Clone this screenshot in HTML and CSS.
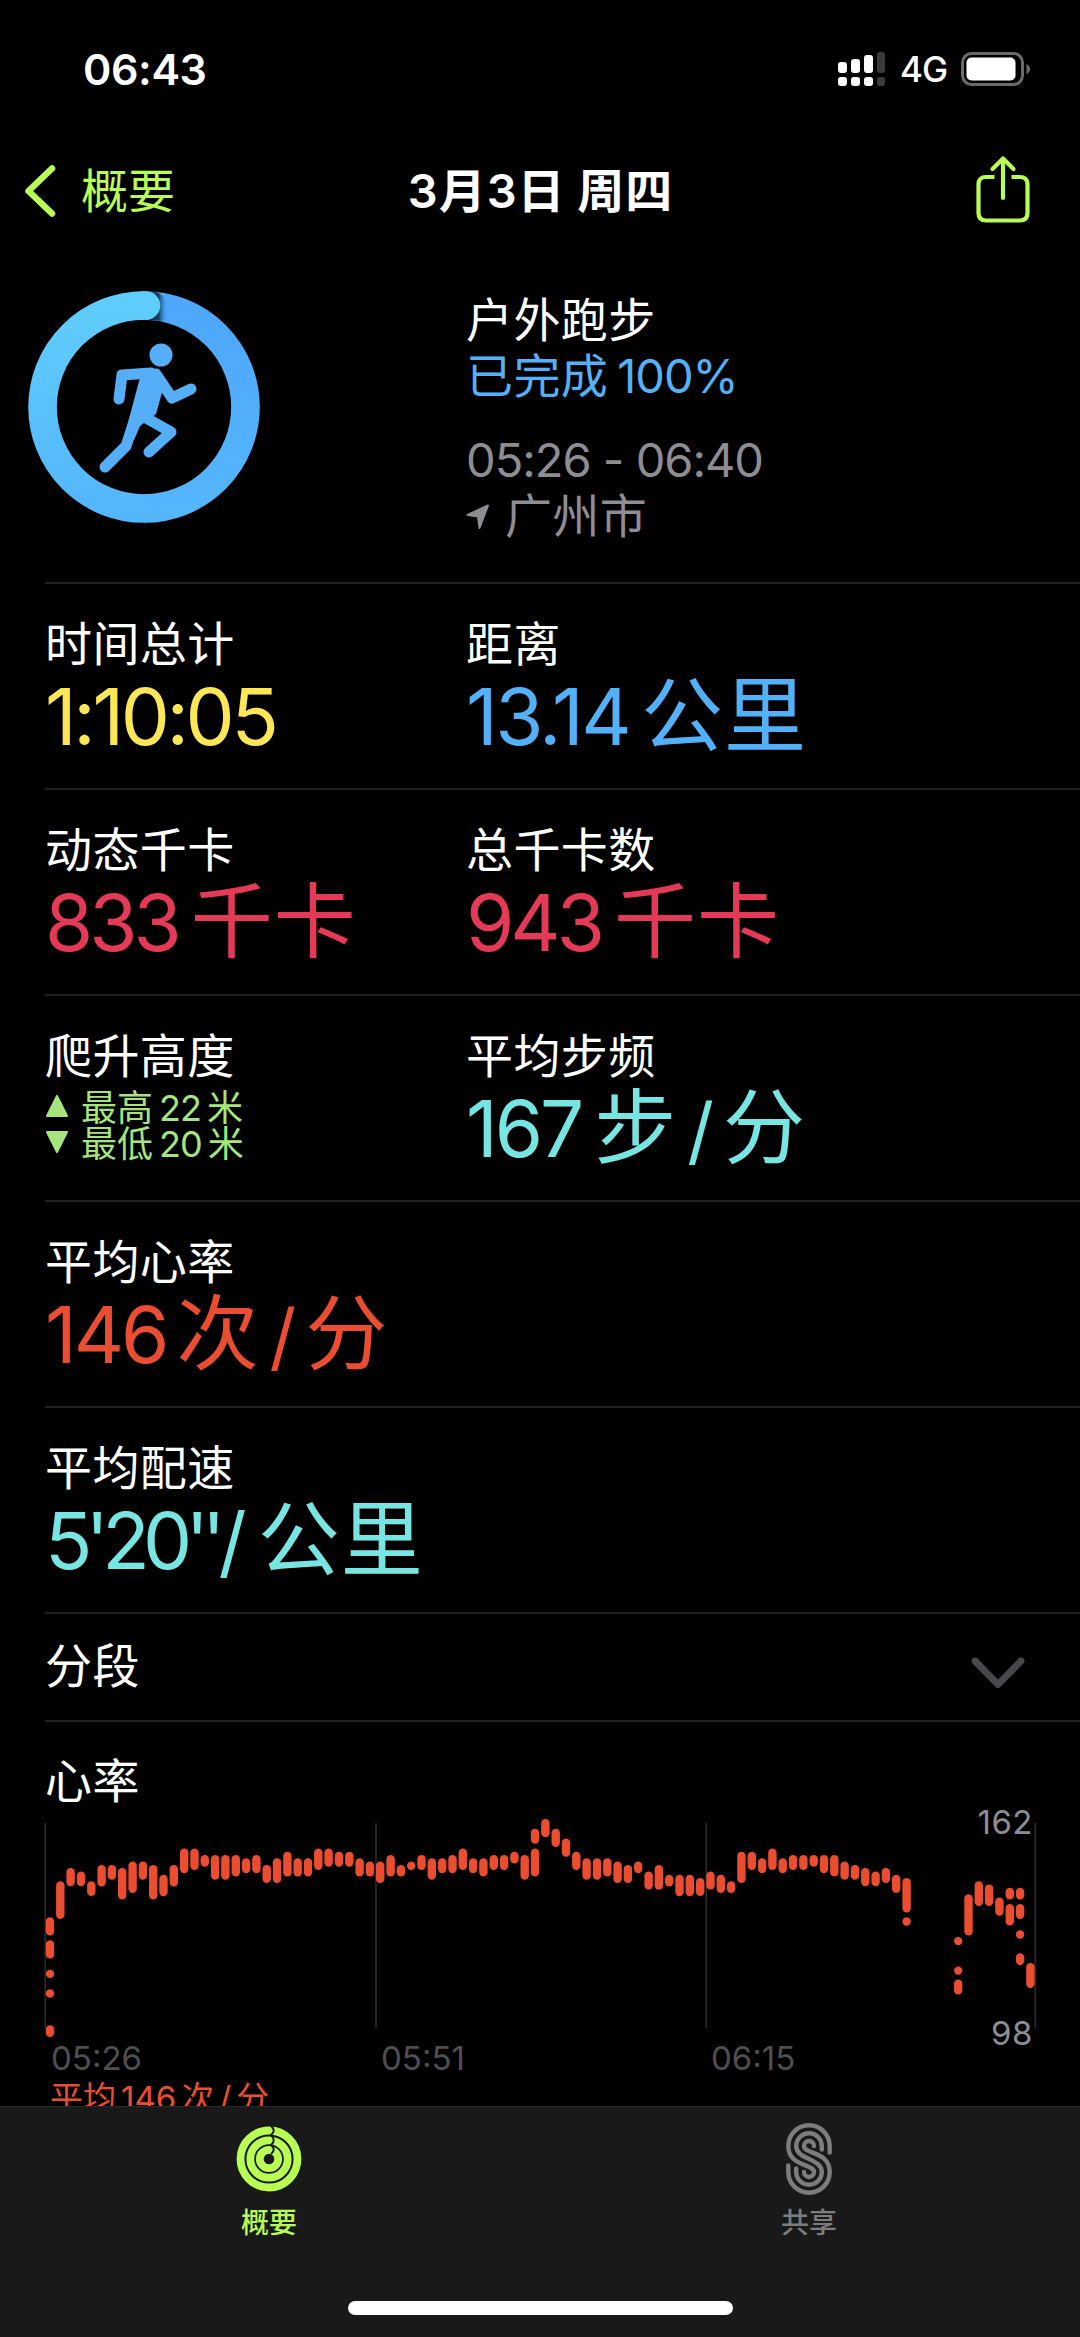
FILE: index.html
```
<!DOCTYPE html>
<html lang="zh-CN">
    <head>
        <meta charset="utf-8">
        <title>户外跑步</title>
        <link rel="stylesheet" href="styles.css">
    </head>
    <body>
        <div class="screen">
            <div class="statusBar">
                <div class="clock">06:43</div>
                <div class="statusIcons">
                    <svg class="signal" width="48" height="36" viewBox="0 0 48 36">
                        <g fill="#fff">
                            <rect x="0" y="11" width="9" height="11" rx="3"/>
                            <rect x="13" y="8" width="9" height="14" rx="3"/>
                            <rect x="26" y="4" width="9" height="18" rx="3"/>
                            <rect x="0" y="26" width="9" height="9" rx="3"/>
                            <rect x="13" y="26" width="9" height="9" rx="3"/>
                            <rect x="26" y="26" width="9" height="9" rx="3"/>
                        </g>
                        <g fill="#3a3a3a">
                            <rect x="39" y="1" width="8" height="21" rx="3"/>
                            <rect x="39" y="26" width="8" height="9" rx="3"/>
                        </g>
                    </svg>
                    <span class="network">4G</span>
                    <svg class="battery" width="70" height="34" viewBox="0 0 70 34">
                        <rect x="1.5" y="1.5" width="60" height="31" rx="9" fill="none" stroke="#6a6a6a" stroke-width="3"/>
                        <rect x="5.5" y="5.5" width="49" height="23" rx="5" fill="#fff"/>
                        <path d="M65.500 12 Q69 13.500 69 17 Q69 20.500 65.500 22Z" fill="#6a6a6a"/>
                    </svg>
                </div>
            </div>
            <div class="navBar">
                <div class="back">
                    <svg width="32" height="54" viewBox="0 0 32 54">
                        <path d="M28 4.500 L4.500 27 L28 49.500" fill="none" stroke="#b8fc54" stroke-width="6.500" stroke-linecap="round" stroke-linejoin="round"/>
                    </svg>
                    <span>概要</span>
                </div>
                <div class="navTitle"><b>3</b>月<b>3</b>日 周四</div>
                <svg class="share" width="54" height="68" viewBox="0 0 54 68">
                    <path d="M18.500 21 H10 Q2.500 21 2.500 28.500 V57 Q2.500 64.500 10 64.500 H44 Q51.500 64.500 51.500 57 V28.500 Q51.500 21 44 21 H35.500" fill="none" stroke="#b8fc54" stroke-width="4.200"/>
                    <path d="M27 42 V3 M16.500 13 L27 2.500 L37.500 13" fill="none" stroke="#b8fc54" stroke-width="4.200" stroke-linecap="round" stroke-linejoin="round"/>
                </svg>
            </div>

            <div class="hero">
                <div class="ring">
                    <svg width="234" height="242" viewBox="0 0 234 242">
                        <defs>
                            <linearGradient id="ringLeft" x1="0" y1="0" x2="0" y2="1">
                                <stop offset="0" stop-color="#5fcdfb"/>
                                <stop offset="1" stop-color="#54b6fb"/>
                            </linearGradient>
                            <linearGradient id="ringRight" x1="0" y1="0" x2="0" y2="1">
                                <stop offset="0" stop-color="#4ea7fb"/>
                                <stop offset="1" stop-color="#54b6fb"/>
                            </linearGradient>
                            <linearGradient id="capShadow" x1="0" y1="0" x2="1" y2="0">
                                <stop offset="0.5" stop-color="#123a5c"/>
                                <stop offset="1" stop-color="#4ea8fb" stop-opacity="0"/>
                            </linearGradient>
                        </defs>
                        <path d="M117 15.500 A101.500 101.500 0 0 1 117 218.500" fill="none" stroke="url(#ringRight)" stroke-width="28.600"/>
                        <path d="M118 218.500 H117 A101.500 101.500 0 0 1 117 15.500" fill="none" stroke="url(#ringLeft)" stroke-width="28.600"/>
                        <path d="M122 1.300 Q138 2 141 15 Q142 26 136 31 L122 30Z" fill="url(#capShadow)"/>
                        <path d="M116 15.500 H119" fill="none" stroke="#5fcdfb" stroke-width="28.600" stroke-linecap="round"/>
                        <circle cx="134" cy="65" r="11.500" fill="#55aff8"/>
                        <g fill="none" stroke="#55aff8" stroke-linecap="round" stroke-linejoin="round">
                            <path d="M124 83 L95 85 L92 109" stroke-width="11"/>
                            <path d="M129 84 L145 108 L164 99" stroke-width="11"/>
                            <path d="M112 124 L144 142 L122 162" stroke-width="11"/>
                            <path d="M109 126 L99 156 L78 177" stroke-width="11"/>
                        </g>
                        <path d="M114 84 L126 78 L134 86 L136 99 L129 124 L113 136 L107 150 L96 151Z" fill="#55aff8"/>
                    </svg>
                </div>
                <div class="heroInfo">
                    <div class="white">户外跑步</div>
                    <div class="blue done">已完成<b>100%</b></div>
                    <div class="period"><b>05:26 - 06:40</b></div>
                    <div class="place">
                        <svg width="24" height="26" viewBox="0 0 24 26">
                            <path d="M1.500 11 L22 1.500 L13.500 24 L12 12.500Z" fill="#8e8d93" stroke="#8e8d93" stroke-width="2" stroke-linejoin="round"/>
                        </svg>
                        <span>广州市</span>
                    </div>
                </div>
            </div>

            <div class="row">
                <div class="stat">
                    <div class="label">时间总计</div>
                    <div class="value yellow"><b class="duration">1:10:05</b></div>
                </div>
                <div class="stat">
                    <div class="label">距离</div>
                    <div class="value blue"><b class="distance">13.14</b>公里</div>
                </div>
            </div>
            <div class="row">
                <div class="stat">
                    <div class="label">动态千卡</div>
                    <div class="value red"><b>833</b>千卡</div>
                </div>
                <div class="stat">
                    <div class="label">总千卡数</div>
                    <div class="value red"><b>943</b>千卡</div>
                </div>
            </div>
            <div class="row">
                <div class="stat">
                    <div class="label">爬升高度</div>
                    <div class="climb">
                        <div class="climbLine">
                            <svg width="24" height="24" viewBox="0 0 24 24"><path d="M12 2 L22 22 H2Z"/></svg>
                            <span>最高<b>22</b>米</span>
                        </div>
                        <div class="climbLine">
                            <svg width="24" height="24" viewBox="0 0 24 24"><path d="M12 22 L22 2 H2Z"/></svg>
                            <span>最低<b>20</b>米</span>
                        </div>
                    </div>
                </div>
                <div class="stat">
                    <div class="label">平均步频</div>
                    <div class="value cyan"><b class="rate">167</b>步<i>/</i>分</div>
                </div>
            </div>
            <div class="row">
                <div class="stat">
                    <div class="label">平均心率</div>
                    <div class="value orange"><b class="pulse">146</b>次<i>/</i>分</div>
                </div>
            </div>
            <div class="row">
                <div class="stat">
                    <div class="label">平均配速</div>
                    <div class="value cyan"><b class="pace">5'20''/</b>公里</div>
                </div>
            </div>
            <div class="row segments">
                <div class="label">分段</div>
                <svg width="54" height="34" viewBox="0 0 54 34">
                    <path d="M4 4 L27 27.500 L50 4" fill="none" stroke="#48484a" stroke-width="6.800" stroke-linecap="round" stroke-linejoin="round"/>
                </svg>
            </div>

            <div class="heart">
                <div class="label">心率</div>
                <svg id="heartChart" width="1035" height="244" viewBox="0 0 1035 244"></svg>
                <div class="times">
                    <span>05:26</span>
                    <span>05:51</span>
                    <span>06:15</span>
                </div>
                <div class="average">平均<b>146</b>次<i>/</i>分</div>
            </div>

            <div class="tabBar">
                <div class="tab active">
                    <svg width="66" height="74" viewBox="-33 -37 66 74">
                        <g fill="none" stroke="#b8fc54" stroke-width="7.800">
                            <circle r="28.500"/>
                            <circle r="18.700"/>
                            <circle r="9.200"/>
                        </g>
                        <path d="M2 -33 Q7.500 -28.400 2 -24 Q7.500 -18.700 2 -14 Q7.500 -9.500 2 -5" fill="none" stroke="#191919" stroke-width="2"/>
                    </svg>
                    <span>概要</span>
                </div>
                <div class="tab">
                    <svg width="66" height="74" viewBox="-33 -37 66 74">
                        <g fill="none" stroke="#7d7d7d" stroke-width="4.400" stroke-linecap="round">
                            <path id="strand" d="M20.700 -6.500 V-13 A20.700 20.700 0 0 0 -20.700 -13 C-20.700 8 5 4.500 5 13 A5 5 0 0 1 -5 13"/>
                            <path d="M12.800 -9.500 V-13 A12.800 12.800 0 0 0 -12.800 -13 C-12.800 1 12.800 -1 12.800 13 A12.800 12.800 0 0 1 -12.800 13 V9.500"/>
                            <use href="#strand" transform="rotate(180)"/>
                        </g>
                    </svg>
                    <span>共享</span>
                </div>
            </div>
            <div class="homeIndicator"></div>
        </div>
        <script>
            // [slot, highest bpm, lowest bpm]
            const beats = [
                [0,132,129],[0,125,122],[0,116,116],[0,110,110],[0,99,98],
                [1,143,134],[2,147,144],[3,146,144],[4,143,141],[5,148,144],[6,148,146],[7,147,140],
                [8,149,142],[9,149,146],[10,148,140],[11,145,141],[12,148,144],[13,153,148],[14,153,149],
                [15,151,150],[16,151,146],[17,151,146],[18,151,147],[19,150,148],[20,151,148],[21,148,145],
                [22,150,145],[23,152,147],[24,150,147],[25,150,147],[26,153,149],[27,153,150],[28,152,150],
                [29,152,150],[30,150,147],[31,149,147],[32,149,145],[33,151,147],[34,148,147],[35,149,149],
                [36,151,149],[37,150,146],[38,150,148],[39,151,148],[40,153,149],[41,150,148],[42,150,147],
                [43,151,149],[44,151,149],[45,152,151],[46,151,146],[47,159,157],[47,153,147],[48,162,159],
                [49,159,156],[50,156,153],[51,152,149],[52,150,146],[53,150,146],[54,150,147],[55,149,145],
                [56,148,145],[57,149,148],[58,146,143],[59,148,143],[60,145,144],[61,145,141],[62,145,141],
                [63,144,141],[64,146,143],[65,145,142],[66,143,142],[67,152,145],[68,152,149],[69,150,148],
                [70,153,149],[71,150,148],[72,151,149],[73,151,149],[74,151,150],[75,151,148],[76,151,147],
                [77,149,146],[78,148,146],[79,147,144],[80,146,144],[81,147,145],[82,145,142],[83,144,136],
                [83,132,132],[88,126,126],[88,117,117],[88,113,111],[89,139,129],[90,143,138],[91,142,138],
                [92,138,135],[93,141,140],[93,136,132],[94,141,140],[94,136,134],[94,128,128],[94,121,120],
                [95,118,113]
            ];
            const step = 10.32;
            const bar = 8.4;
            const bpm = 3.275;
            let svg = '';
            for(let x of [-0.5, 330.2, 660.5, 989.5]){
                svg += `<rect class="gridLine" x="${x}" y="11" width="1.6" height="205"/>`;
            }
            for(let [slot, high, low] of beats){
                let x = 0.8 + slot * step;
                let y = 11.2 - bar / 2 + (162 - high) * bpm;
                let height = (high - low) * bpm + bar;
                svg += `<rect class="beat" x="${x.toFixed(1)}" y="${y.toFixed(1)}" width="${bar}" height="${height.toFixed(1)}" rx="${bar / 2}"/>`;
            }
            svg += '<text class="limit" x="988" y="22">162</text>';
            svg += '<text class="limit" x="988" y="233">98</text>';
            document.getElementById('heartChart').innerHTML = svg;
        </script>
    </body>
</html>
```
FILE: styles.css
```
*{
    margin: 0;
    padding: 0;
    box-sizing: border-box;
}
body{
    background: #000;
    font-family: "Noto Sans CJK SC", sans-serif;
    color: #fff;
}
svg{
    display: block;
    flex: none;
    overflow: visible;
}
b, i{
    font-family: Inter, sans-serif;
    font-weight: inherit;
    font-style: normal;
    line-height: 0;
}
.screen{
    position: relative;
    width: 1080px;
    height: 2337px;
    overflow: hidden;
    display: flex;
    flex-direction: column;
}
.statusBar{
    height: 138px;
    display: flex;
    justify-content: space-between;
    padding: 0 49px 0 83px;
    align-items: center;
    font-family: Inter, sans-serif;
}
.clock{
    font-size: 43px;
    font-weight: 600;
    letter-spacing: -0.4px;
}
.statusIcons{
    display: flex;
    align-items: center;
}
.network{
    width: 75px;
    text-align: center;
    font-size: 35px;
    font-weight: 500;
    letter-spacing: -1px;
}
.navBar{
    height: 106px;
    display: grid;
    grid-template-columns: 1fr auto 1fr;
    align-items: center;
    padding: 0 50px 0 24px;
    font-size: 47px;
    line-height: 56px;
}
.back{
    display: flex;
    align-items: center;
    gap: 25px;
    color: #b8fc54;
}
.back span, .navTitle{
    margin-top: -6px;
}
.navTitle{
    font-weight: 600;
    letter-spacing: 1px;
    padding-left: 27px;
}
.share{
    justify-self: end;
    margin-bottom: 2px;
}
.hero{
    height: 340px;
    display: flex;
    margin-left: 45px;
    border-bottom: 2px solid #222;
}
.ring{
    width: 421px;
    margin-left: -18px;
    padding-top: 46px;
}
.heroInfo{
    padding-top: 45px;
    font-size: 47px;
    line-height: 56px;
    letter-spacing: 0.4px;
    margin-left: 18px;
}
.heroInfo b{
    letter-spacing: -1px;
}
.done b{
    margin-left: 9px;
}
.period{
    margin-top: 28px;
    color: #8e8d93;
}
.place{
    display: flex;
    align-items: center;
    gap: 15px;
    color: #8e8d93;
}
.place svg{
    margin-top: 7px;
}
.row{
    height: 206px;
    display: flex;
    margin-left: 45px;
    padding-top: 29px;
    border-bottom: 2px solid #222;
}
.stat{
    width: 421px;
    white-space: nowrap;
}
.label{
    font-size: 47px;
    line-height: 56px;
    letter-spacing: 0.4px;
}
.value{
    font-size: 82px;
    line-height: 82px;
    letter-spacing: 1px;
}
.value b{
    font-size: 78px;
    letter-spacing: -4px;
    margin-right: 13px;
}
.value .duration{
    letter-spacing: -3.4px;
}
.value .distance{
    letter-spacing: -2.6px;
    margin-right: 12px;
}
.value .rate{
    letter-spacing: -3px;
}
.value .pulse{
    letter-spacing: -3px;
    margin-right: 10px;
}
.value .pace{
    letter-spacing: -6.8px;
    margin-right: 18px;
}
.value i{
    font-size: 74px;
    letter-spacing: 0;
    margin: 0 9px 0 10px;
}
.climb{
    margin-top: 6px;
    font-size: 36px;
    line-height: 36px;
    color: #a5e57c;
    fill: #a5e57c;
}
.climbLine{
    display: flex;
    align-items: center;
    gap: 12px;
}
.climbLine svg{
    stroke: #a5e57c;
    stroke-width: 2px;
    stroke-linejoin: round;
    margin-top: 2px;
}
.climb b{
    margin: 0 6px;
    letter-spacing: -1px;
}
.yellow{
    color: #fde757;
}
.blue{
    color: #53b1f9;
}
.red{
    color: #e53a57;
}
.cyan{
    color: #77e6e3;
}
.orange{
    color: #eb4d31;
}
.segments{
    height: 108px;
    padding: 21px 55px 0 0;
    justify-content: space-between;
}
.segments svg{
    margin-top: 22px;
}
.heart{
    margin-left: 45px;
    padding-top: 28px;
}
.heart .label{
    margin-bottom: 6px;
}
.gridLine{
    fill: #2c2c2c;
}
.beat{
    fill: #eb4d31;
}
.limit{
    font-family: Inter, sans-serif;
    font-size: 33px;
    letter-spacing: 0.5px;
    text-anchor: end;
    fill: #8e8d93;
}
.times{
    display: flex;
    margin-top: -15px;
    font-family: Inter, sans-serif;
    font-size: 33px;
    line-height: 34px;
    color: #4f4f51;
}
.times span{
    width: 330px;
    padding-left: 6px;
}
.average{
    padding-left: 5px;
    font-size: 33px;
    line-height: 42px;
    color: #eb4d31;
}
.average b{
    margin: 0 5px;
}
.average i{
    margin: 0 5px;
}
.tabBar{
    position: absolute;
    left: 0;
    bottom: 0;
    width: 1080px;
    height: 231px;
    display: flex;
    background: #191919;
    border-top: 1px solid #2a2a2a;
}
.tab{
    width: 50%;
    padding: 15px 2px 0 0;
    display: flex;
    flex-direction: column;
    align-items: center;
    gap: 6px;
    font-size: 28px;
    line-height: 38px;
    font-weight: 500;
    color: #7d7d7d;
}
.active{
    color: #b8fc54;
}
.homeIndicator{
    position: absolute;
    left: 348px;
    bottom: 22px;
    width: 385px;
    height: 14px;
    border-radius: 7px;
    background: #fff;
}
```
